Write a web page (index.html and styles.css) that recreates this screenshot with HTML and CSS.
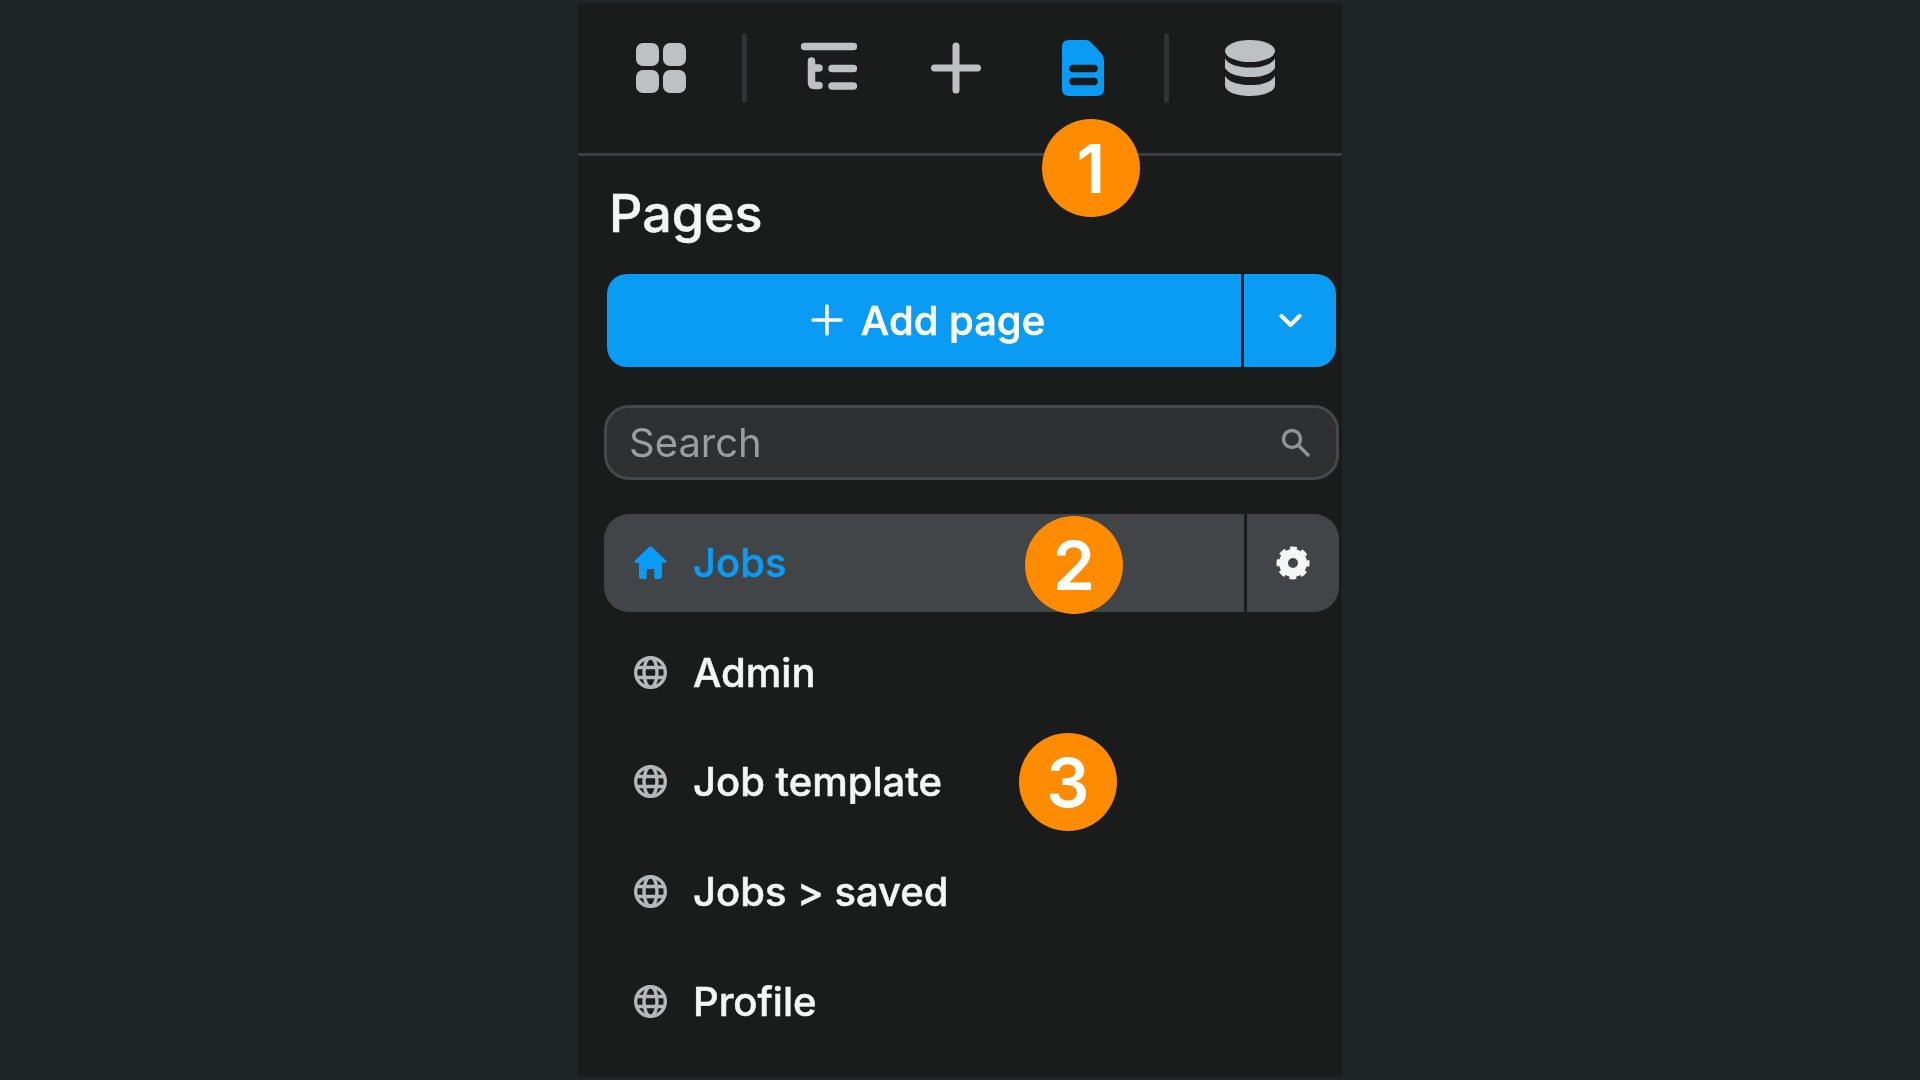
FILE: index.html
```html
<!DOCTYPE html>
<html lang="en">
<head>
<meta charset="utf-8">
<title>Pages</title>
<link rel="stylesheet" href="styles.css">
</head>
<body>
<main class="panel">
  <header class="toolbar">
    <svg class="tool tool-grid" width="50" height="56" viewBox="0 0 50 56" fill="#bdc1c1"><rect y="3" width="23" height="23" rx="7"/><rect x="27" y="3" width="23" height="23" rx="7"/><rect y="30" width="23" height="23" rx="7"/><rect x="27" y="30" width="23" height="23" rx="7"/></svg>
    <span class="divider divider-a"></span>
    <svg class="tool tool-outline" width="56" height="56" viewBox="0 0 56 56" fill="none" stroke="#bdc1c1" stroke-width="7.500" stroke-linecap="round"><path d="M3.500 6.500H52.500M10.500 21V42.500Q10.500 45.500 13.500 45.500H18M10.500 28H18M31 28.500H52.500M31 46H52.500"/></svg>
    <svg class="tool tool-plus" width="50" height="56" viewBox="0 0 50 56" fill="none" stroke="#bdc1c1" stroke-width="7" stroke-linecap="round"><path d="M25 6V50M3.500 28H46.500"/></svg>
    <svg class="tool tool-page" width="42" height="56" viewBox="0 0 42 56"><path fill="#0a9cf5" d="M7 0H24Q27 0 29 2.500L39 13Q42 16 42 20V49Q42 56 35 56H7Q0 56 0 49V7Q0 0 7 0Z"/><path stroke="#1a1c1c" stroke-width="7.500" stroke-linecap="round" d="M11 28.500H32M11 41.500H32"/></svg>
    <span class="divider divider-b"></span>
    <svg class="tool tool-db" width="50" height="56" viewBox="0 0 50 56" fill="#bdc1c1"><ellipse cx="25" cy="11" rx="25" ry="11"/><path d="M0 18.500C4 25 14 27.500 25 27.500S46 25 50 18.500V28C46 34.500 36 37 25 37S4 34.500 0 28Z"/><path d="M0 36C4 42.500 14 45 25 45S46 42.500 50 36V45C50 52 38 56 25 56S0 52 0 45Z"/></svg>
  </header>

  <h1 class="title">Pages</h1>

  <div class="add-group">
    <button class="add-main">
      <svg width="32" height="32" viewBox="0 0 32 32" fill="none" stroke="#fff" stroke-width="3.500" stroke-linecap="round"><path d="M16 2V30M2 16H30"/></svg>
      <span>Add page</span>
    </button>
    <button class="add-more">
      <svg width="23" height="15" viewBox="0 0 23 15" fill="none" stroke="#fff" stroke-width="4" stroke-linecap="round" stroke-linejoin="round"><path d="M2.500 3L11.500 12L20.500 3"/></svg>
    </button>
  </div>

  <div class="search">
    <span class="search-label">Search</span>
    <svg width="29" height="29" viewBox="0 0 29 29" fill="none" stroke="#8f9493" stroke-width="3.400" stroke-linecap="round"><circle cx="11" cy="11" r="8.500"/><path d="M17.500 17.500L27 27"/></svg>
  </div>

  <ul class="pages">
    <li class="page page-active">
      <div class="page-main">
        <svg class="page-icon" width="33" height="33" viewBox="0 0 33 33" fill="#0a9cf5"><path d="M14.700 1.300Q16.500-.2 18.300 1.300L32 14.500Q33.500 16.500 31 17H28V30Q28 33 25 33H21.500Q20.300 33 20.300 31.500V23H12.700V31.500Q12.700 33 11.500 33H8Q5 33 5 30V17H2Q-.5 16.500 1 14.500Z"/></svg>
        <span>Jobs</span>
      </div>
      <div class="page-settings">
        <svg width="34" height="34" viewBox="0 0 34 34" fill="none" stroke="#f4f5f5"><circle cx="17" cy="17" r="9.500" stroke-width="9"/><circle cx="17" cy="17" r="14" stroke-width="5" stroke-dasharray="6.500 4.500" stroke-dashoffset="3.250"/></svg>
      </div>
    </li>
    <li class="page">
      <svg class="page-icon" width="33" height="33" viewBox="0 0 33 33" fill="none" stroke="#b4b8b8" stroke-width="3.400"><circle cx="16.500" cy="16.500" r="14.800"/><ellipse cx="16.500" cy="16.500" rx="6.500" ry="14.800"/><path d="M2 11.500H31M2 21.500H31"/></svg>
      <span>Admin</span>
    </li>
    <li class="page">
      <svg class="page-icon" width="33" height="33" viewBox="0 0 33 33" fill="none" stroke="#b4b8b8" stroke-width="3.400"><circle cx="16.500" cy="16.500" r="14.800"/><ellipse cx="16.500" cy="16.500" rx="6.500" ry="14.800"/><path d="M2 11.500H31M2 21.500H31"/></svg>
      <span>Job template</span>
    </li>
    <li class="page">
      <svg class="page-icon" width="33" height="33" viewBox="0 0 33 33" fill="none" stroke="#b4b8b8" stroke-width="3.400"><circle cx="16.500" cy="16.500" r="14.800"/><ellipse cx="16.500" cy="16.500" rx="6.500" ry="14.800"/><path d="M2 11.500H31M2 21.500H31"/></svg>
      <span>Jobs &gt; saved</span>
    </li>
    <li class="page">
      <svg class="page-icon" width="33" height="33" viewBox="0 0 33 33" fill="none" stroke="#b4b8b8" stroke-width="3.400"><circle cx="16.500" cy="16.500" r="14.800"/><ellipse cx="16.500" cy="16.500" rx="6.500" ry="14.800"/><path d="M2 11.500H31M2 21.500H31"/></svg>
      <span>Profile</span>
    </li>
  </ul>

  <span class="badge badge-1">1</span>
  <span class="badge badge-2">2</span>
  <span class="badge badge-3">3</span>
</main>
</body>
</html>
```
FILE: styles.css
```css
* { box-sizing: border-box; }

html, body {
  margin: 0;
  height: 100%;
  overflow: hidden;
}

body {
  background: #1f2526;
  display: flex;
  justify-content: center;
  align-items: flex-start;
  padding-top: 3px;
  font-family: Inter, "Liberation Sans", sans-serif;
}

.panel {
  position: relative;
  width: 764px;
  height: 1074px;
  background: #1a1c1c;
  padding: 0 3px 0 26px;
  filter: blur(0.6px);
}

.toolbar {
  display: flex;
  align-items: center;
  height: 153px;
  margin: 0 -3px 0 -26px;
  padding: 0 0 21px 58px;
  border-bottom: 3px solid #3d3f40;
}

.tool { flex: none; }

.divider {
  flex: none;
  width: 5px;
  height: 70px;
  border-radius: 3px;
  background: #303234;
}

.divider-a { margin-left: 56px; }
.tool-outline { margin-left: 54px; }
.tool-plus { margin-left: 74px; }
.tool-page { margin-left: 81px; }
.divider-b { margin-left: 60px; }
.tool-db { margin-left: 56px; }

.title {
  margin: 33px 0 0 5px;
  height: 50px;
  font-size: 52px;
  line-height: 50px;
  font-weight: 500;
  -webkit-text-stroke: 0.5px currentColor;
  color: #f4f5f5;
}

.add-group {
  display: flex;
  height: 93px;
  margin: 34.5px 3px 0 3px;
}

.add-group button {
  border: 0;
  display: flex;
  align-items: center;
  justify-content: center;
  background: #0a9cf5;
  color: #fff;
  padding: 0;
  font: inherit;
}

.add-main {
  width: 634px;
  gap: 18px;
  border-radius: 20px 0 0 20px;
  font-size: 40px !important;
  font-weight: 500 !important;
  -webkit-text-stroke: 0.6px currentColor;
  padding-left: 8px !important;
}

.add-more {
  flex: 1;
  margin-left: 3px;
  border-radius: 0 20px 20px 0;
}

.search {
  display: flex;
  align-items: center;
  justify-content: space-between;
  height: 75px;
  margin-top: 38px;
  padding: 0 26px 0 22px;
  border: 3px solid #45484a;
  border-radius: 25px;
  background: #2e2f31;
}

.search-label {
  font-size: 40px;
  color: #9a9e9e;
}

.pages {
  list-style: none;
  display: flex;
  flex-direction: column;
  gap: 11.7px;
  margin: 34px 0 0;
  padding: 0;
}

.page {
  display: flex;
  align-items: center;
  height: 98px;
  padding-left: 30px;
  gap: 26px;
  font-size: 40px;
  font-weight: 500;
  -webkit-text-stroke: 0.5px currentColor;
  color: #f4f5f5;
}

.page-icon { flex: none; }

.page-active {
  padding-left: 0;
  gap: 0;
  border-radius: 25px;
  background: #424547;
  color: #0a9cf5;
}

.page-main {
  display: flex;
  align-items: center;
  gap: 26px;
  width: 640px;
  height: 100%;
  padding-left: 30px;
}

.page-settings {
  flex: 1;
  display: flex;
  align-items: center;
  justify-content: center;
  height: 100%;
  border-left: 3px solid #1a1c1c;
}

.badge {
  position: absolute;
  width: 98px;
  height: 98px;
  border-radius: 50%;
  background: #ff8c00;
  color: #fff;
  display: flex;
  align-items: center;
  justify-content: center;
  font-size: 68px;
  font-weight: 600;
}

.badge-1 { left: 464px; top: 116px; }
.badge-2 { left: 447px; top: 513px; }
.badge-3 { left: 441px; top: 730px; }
```
